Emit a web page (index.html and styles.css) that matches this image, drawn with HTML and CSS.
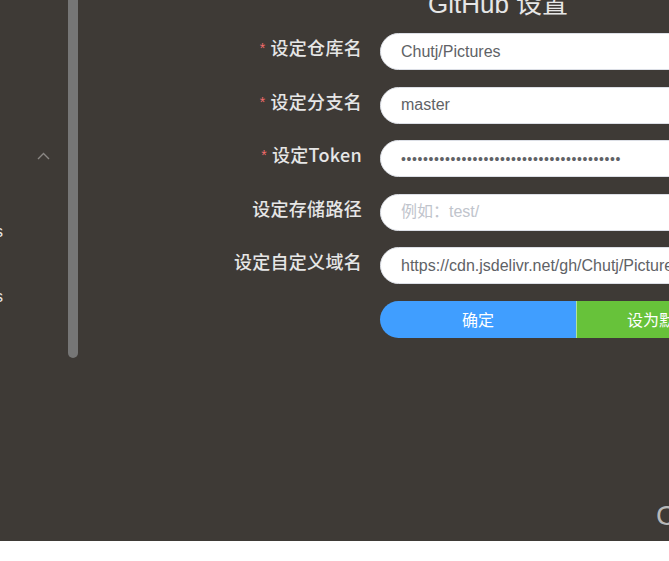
FILE: index.html
```html
<!DOCTYPE html>
<html lang="zh-CN">
<head>
<meta charset="utf-8">
<title>GitHub 设置</title>
<link rel="stylesheet" href="styles.css">
</head>
<body>
<div class="app">
  <aside class="side">
    <div class="side-group">
      <svg class="chevron" width="13" height="8" viewBox="0 0 13 8"><polyline points="1,7 6.5,1.5 12,7" fill="none" stroke="#8a8784" stroke-width="1.4"/></svg>
    </div>
    <div class="side-item"><span>图床设置s</span></div>
    <div class="side-item"><span>上传记录s</span></div>
  </aside>
  <div class="track"><div class="thumb"></div></div>
  <main class="main">
    <h2 class="title">GitHub 设置</h2>
    <form class="form">
      <label class="label"><span class="req">*</span>设定仓库名</label>
      <input class="input" type="text" value="Chutj/Pictures">
      <label class="label"><span class="req">*</span>设定分支名</label>
      <input class="input" type="text" value="master">
      <label class="label"><span class="req">*</span>设定Token</label>
      <input class="input pwd" type="password" value="ghp_0123456789abcdefghijklmnopqrstuvwxyz">
      <label class="label">设定存储路径</label>
      <input class="input" type="text" placeholder="例如：test/">
      <label class="label">设定自定义域名</label>
      <input class="input" type="text" value="https://cdn.jsdelivr.net/gh/Chutj/Pictures/">
      <div class="actions">
        <button class="btn btn-blue" type="button">确定</button>
        <button class="btn btn-green" type="button">设为默认图床</button>
      </div>
    </form>
    <footer class="foot">Copyright © Chutj</footer>
  </main>
</div>
</body>
</html>
```

FILE: styles.css
```css
* { box-sizing: border-box; }
html, body { margin: 0; padding: 0; background: #fff; }
body { font-family: "Liberation Sans", "Noto Sans CJK SC", sans-serif; }

.app {
  display: grid;
  grid-template-columns: 68px 11px 1fr;
  height: 541px;
  width: 669px;
  background: #3e3a36;
  overflow: hidden;
}

.side {
  padding-top: 152px;
  display: flex;
  flex-direction: column;
}
.side-group { height: 8px; padding-left: 37px; display: flex; }
.chevron { display: block; }
.side-item {
  width: 3px;
  display: flex;
  justify-content: flex-end;
  white-space: nowrap;
  color: #e8e8e8;
  font-size: 16px;
  line-height: 20px;
}
.side-item:nth-of-type(2) { margin-top: 62px; }
.side-item:nth-of-type(3) { margin-top: 45px; }

.thumb {
  width: 10px;
  height: 358px;
  background: #767676;
  border-radius: 0 0 5px 5px;
}

.main {
  display: flex;
  flex-direction: column;
  min-width: 0;
}

.title {
  width: 838px;
  margin: -11px 0 0;
  text-align: center;
  font-size: 26px;
  line-height: 30px;
  font-weight: normal;
  color: #e6e6e6;
}

.form {
  margin-top: 14px;
  display: grid;
  grid-template-columns: 283px 537px;
  column-gap: 18px;
  row-gap: 16.5px;
}

.label {
  text-align: right;
  font-family: "Noto Sans CJK SC", sans-serif;
  font-size: 18px;
  font-weight: 500;
  line-height: 28px;
  letter-spacing: 0.3px;
  color: #e6e6e6;
  white-space: nowrap;
}
.req {
  color: #f56c6c;
  font-family: "Liberation Sans", sans-serif;
  font-size: 14px;
  margin-right: 5px;
  vertical-align: 2px;
}

.input {
  display: block;
  width: 100%;
  height: 37px;
  border: 1px solid #dcdfe6;
  border-radius: 19px;
  padding: 0 20px;
  background: #fff;
  color: #606266;
  font-family: "Liberation Sans", sans-serif;
  font-size: 16px;
  outline: none;
}
.input::placeholder { color: #c0c4cc; }
.pwd { font-size: 14px; letter-spacing: 0.6px; }

.actions {
  grid-column: 2;
  display: flex;
  height: 37px;
}
.btn {
  width: 196px;
  height: 37px;
  border: 0;
  color: #fff;
  font-family: "Noto Sans CJK SC", sans-serif;
  font-size: 16px;
  padding: 0;
}
.btn-blue { background: #409eff; border-radius: 19px 0 0 19px; }
.btn-green { background: #67c23a; border-left: 1px solid #b3e19d; width: 197px; }

.foot {
  margin-top: auto;
  padding: 0 0 9px 577px;
  font-size: 28px;
  line-height: 32px;
  color: #b8b8b8;
  white-space: nowrap;
}
```
